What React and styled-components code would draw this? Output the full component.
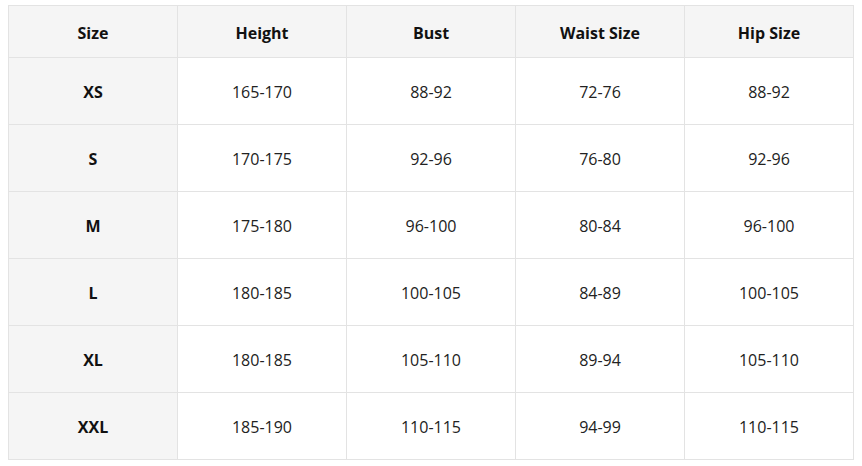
import React from 'react';
import styled, { createGlobalStyle } from 'styled-components';

const GlobalStyle = createGlobalStyle`
  body {
    margin: 5px 8px;
    background: #fff;
    font-family: "Open Sans", "Noto Sans", sans-serif;
    color: #1a1a1a;
  }
`;

const StyledTable = styled.table`
  width: 846px;
  border-collapse: collapse;
  table-layout: fixed;
  font-size: 16px;
`;

const StyledHeadCell = styled.th`
  height: 49px;
  padding: 2px 0 0;
  background: #f5f5f5;
  border: 1px solid #e3e3e3;
  font-weight: 700;
  text-align: center;
  color: #111;
`;

const StyledCell = styled.td`
  height: 64px;
  padding: 2px 0 0;
  border: 1px solid #e3e3e3;
  text-align: center;
  background: ${(p) => (p.$label ? '#f5f5f5' : '#fff')};
  font-weight: ${(p) => (p.$label ? 700 : 400)};
  color: ${(p) => (p.$label ? '#111' : '#222')};
`;

const headers = ['Size', 'Height', 'Bust', 'Waist Size', 'Hip Size'];

const rows = [
  ['XS', '165-170', '88-92', '72-76', '88-92'],
  ['S', '170-175', '92-96', '76-80', '92-96'],
  ['M', '175-180', '96-100', '80-84', '96-100'],
  ['L', '180-185', '100-105', '84-89', '100-105'],
  ['XL', '180-185', '105-110', '89-94', '105-110'],
  ['XXL', '185-190', '110-115', '94-99', '110-115'],
];

const App = () => {
  return (
    <>
      <GlobalStyle />
      <StyledTable>
        <thead>
          <tr>
            {headers.map((h) => (
              <StyledHeadCell key={h}>{h}</StyledHeadCell>
            ))}
          </tr>
        </thead>
        <tbody>
          {rows.map((row) => (
            <tr key={row[0]}>
              {row.map((val, i) => (
                <StyledCell key={i} $label={i === 0}>
                  {val}
                </StyledCell>
              ))}
            </tr>
          ))}
        </tbody>
      </StyledTable>
    </>
  );
};

export default App;
